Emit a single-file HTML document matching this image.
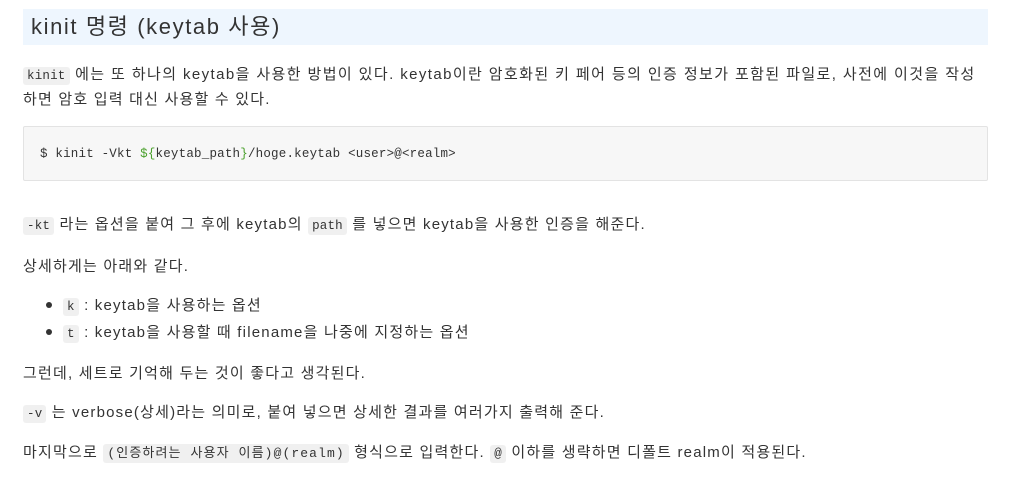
<!DOCTYPE html>
<html><head><meta charset="utf-8"><style>
body{margin:0;width:1014px;height:482px;background:#fff;overflow:hidden;font-family:"Liberation Sans","Noto Sans CJK KR",sans-serif;color:#333;}
.h{position:absolute;left:23px;top:9px;width:965px;height:36px;background:#eef6fe;}
.h span{position:absolute;left:8px;top:3px;font-size:22px;line-height:30px;color:#333;letter-spacing:1.6px;}
.l{position:absolute;left:23px;font-size:15px;line-height:25px;white-space:nowrap;letter-spacing:1.2px;}
code{font-family:"Liberation Mono","Noto Sans CJK KR",monospace;font-size:12.5px;background:#f0f0f0;border-radius:3px;padding:2px 4px;letter-spacing:0.2px;}
.pre{position:absolute;left:23px;top:126px;width:963px;height:53px;background:#f7f7f7;border:1px solid #e3e3e3;border-radius:2px;}
.pre div{position:absolute;left:16px;top:15px;font-family:"Liberation Mono",monospace;font-size:12.5px;line-height:24px;color:#333;white-space:pre;letter-spacing:0.2px;}
.g{color:#4aa02c}
.dot{position:absolute;left:46px;width:6px;height:6px;border-radius:50%;background:#333;}
</style></head><body>
<div class="h"><span>kinit 명령 (keytab 사용)</span></div>
<div class="l" style="top:62px;letter-spacing:1.4px"><code>kinit</code> 에는 또 하나의 keytab을 사용한 방법이 있다. keytab이란 암호화된 키 페어 등의 인증 정보가 포함된 파일로, 사전에 이것을 작성</div>
<div class="l" style="top:87px">하면 암호 입력 대신 사용할 수 있다.</div>
<div class="pre"><div>$ kinit -Vkt <span class="g">${</span>keytab_path<span class="g">}</span>/hoge.keytab &lt;user&gt;@&lt;realm&gt;</div></div>
<div class="l" style="top:212px"><code>-kt</code> 라는 옵션을 붙여 그 후에 keytab의 <code>path</code> 를 넣으면 keytab을 사용한 인증을 해준다.</div>
<div class="l" style="top:254px">상세하게는 아래와 같다.</div>
<div class="dot" style="top:302px"></div>
<div class="l" style="top:293px;left:63px"><code>k</code> : keytab을 사용하는 옵션</div>
<div class="dot" style="top:329px"></div>
<div class="l" style="top:320px;left:63px"><code>t</code> : keytab을 사용할 때 filename을 나중에 지정하는 옵션</div>
<div class="l" style="top:361px">그런데, 세트로 기억해 두는 것이 좋다고 생각된다.</div>
<div class="l" style="top:400px"><code>-v</code> 는 verbose(상세)라는 의미로, 붙여 넣으면 상세한 결과를 여러가지 출력해 준다.</div>
<div class="l" style="top:440px">마지막으로 <code style="font-size:13px;letter-spacing:1.1px">(인증하려는 사용자 이름)@(realm)</code> 형식으로 입력한다. <code>@</code> 이하를 생략하면 디폴트 realm이 적용된다.</div>
</body></html>
